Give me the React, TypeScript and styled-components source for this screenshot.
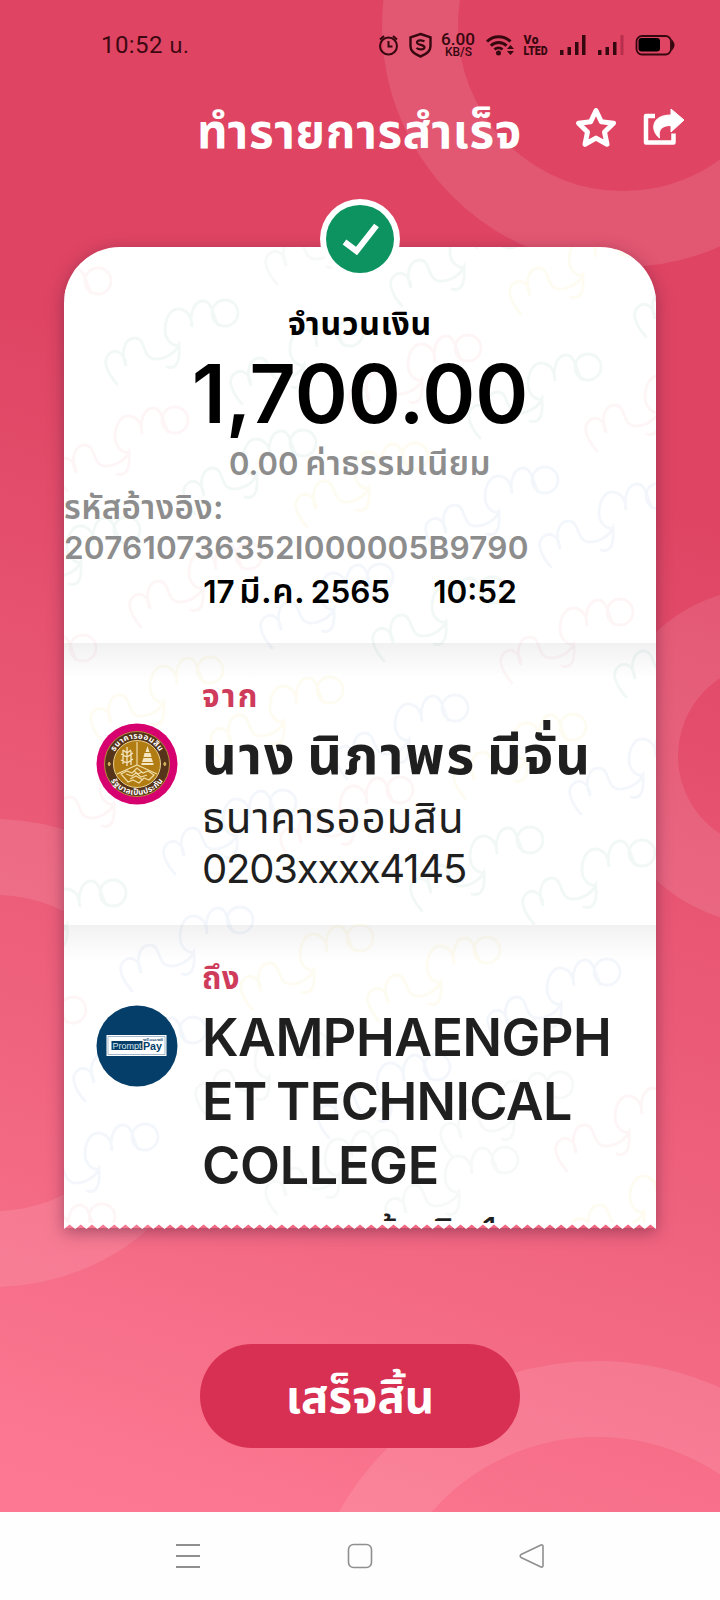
import React from 'react';
import styled, { createGlobalStyle } from 'styled-components';

const thaiStack = `Inter, 'Noto Sans Thai', 'Noto Sans', sans-serif`;

const Global = createGlobalStyle`
  body { margin: 0; font-family: ${thaiStack}; color: #000; }
  * { box-sizing: border-box; }
`;

const Screen = styled.main`
  position: relative;
  width: 720px;
  height: 1600px;
  overflow: hidden;
  display: flex;
  flex-direction: column;
  background: linear-gradient(197deg, #df4463 0%, #df4463 29%, #e75472 48%, #f0647f 70%, #fd7993 93%);
`;

const Backdrop = styled.svg`
  position: absolute;
  inset: 0;
`;

const StatusBar = styled.header`
  position: relative;
  display: flex;
  align-items: center;
  justify-content: space-between;
  height: 90px;
  padding: 0 44px 0 101px;
`;

const Clock = styled.span`
  font: 400 24px/30px Roboto, 'Noto Sans Thai', sans-serif;
  letter-spacing: 0.4px;
  color: #3d0812;
`;

const ClockUnit = styled.span`
  font-size: 22px;
`;

const TitleBar = styled.div`
  position: relative;
  display: flex;
  align-items: center;
  height: 78px;
  padding-left: 197px;
`;

const Title = styled.h1`
  margin: 0;
  padding-top: 3px;
  width: 322px;
  font-size: 47.5px;
  line-height: 78px;
  font-weight: 700;
  letter-spacing: 0.7px;
  color: #fff;
  white-space: nowrap;
`;

const TitleActions = styled.div`
  display: flex;
  gap: 24px;
  margin-left: 55px;
`;

const Slip = styled.section`
  position: relative;
  width: 592px;
  margin: 79px 0 0 64px;
`;

const SlipBody = styled.div`
  position: relative;
  height: 977px;
  border-radius: 56px 56px 0 0;
  background: #fff;
  overflow: hidden;
`;

const SlipShadow = styled.div`
  position: absolute;
  inset: 0 0 2px;
  border-radius: 56px 56px 0 0;
  box-shadow: 0 4px 16px rgba(90, 30, 60, 0.5);
`;

const Watermark = styled.svg`
  position: absolute;
  inset: 0;
  fill: none;
  stroke-width: 2.8;
  stroke-linecap: round;
`;

const Badge = styled.div`
  position: absolute;
  left: 256px;
  top: -48px;
  width: 80px;
  height: 80px;
`;

const Torn = styled.svg`
  position: relative;
  display: block;
  margin-top: -1px;
`;

const Summary = styled.div`
  position: relative;
  display: flex;
  flex-direction: column;
  align-items: center;
  height: 396px;
  padding-top: 56px;
`;

const Line = styled.div<{
  $size: number; $height: number; $weight?: number; $color?: string; $space?: number; $wordGap?: number;
}>`
  font-size: ${p => p.$size}px;
  line-height: ${p => p.$height}px;
  height: ${p => p.$height}px;
  font-weight: ${p => p.$weight ?? 600};
  color: ${p => p.$color ?? '#000'};
  letter-spacing: ${p => p.$space ?? 0}px;
  word-spacing: ${p => p.$wordGap ?? 0}px;
  white-space: nowrap;
`;

const Thai = styled.span`
  font-size: 1.07em;
  line-height: 0;
  letter-spacing: 0.5px;
  margin-left: -1px;
`;

const ReferenceLabel = styled.span`
  margin-left: 20px;
  font-size: 38px;
  line-height: 0;
  letter-spacing: -0.4px;
`;

const Reference = styled.div`
  align-self: stretch;
`;

const DateRow = styled.div`
  display: flex;
  gap: 43px;
  padding-top: 1px;
`;

const Party = styled.div<{ $height: number }>`
  position: relative;
  display: flex;
  height: ${p => p.$height}px;
  padding: 33px 0 0 32px;
  background: linear-gradient(rgba(70, 70, 80, 0.075), rgba(70, 70, 80, 0.04) 16px, transparent 36px);
`;

const PartyLogo = styled.svg`
  flex: none;
  margin: 47px 24px 0 0;
`;

const PartyName = styled.div`
  padding-top: 8px;
`;

const PartyText = styled.div``;

const Footer = styled.div`
  position: relative;
  display: flex;
  justify-content: center;
  margin-top: 114px;
`;

const DoneButton = styled.button`
  width: 320px;
  height: 104px;
  border: 0;
  border-radius: 52px;
  background: #d83052;
  color: #fff;
  font: 700 45.5px/100px ${thaiStack};
  padding-top: 2px;
`;

const NavBar = styled.nav`
  position: relative;
  display: flex;
  justify-content: space-between;
  align-items: center;
  height: 88px;
  margin-top: auto;
  padding: 0 175px;
  background: #fefefe;
`;

const mark =
  'M-108 71 C-116 62 -124 48 -116 41 C-108 34 -99 42 -99 53 C-105 38 -100 25 -90 25 C-80 25 -82 42 -74 45 C-67 48 -52 44 -46 32 C-45 46 -47 57 -58 54 M-46 32 C-52 34 -60 27 -60 17 C-60 6 -55 -4 -47 -4 C-38 -4 -33 4 -33 14 C-36 -1 -30 -12 -22 -12 C-13 -12 -12 2 -7 12';

const teal = '#f1f8f6';
const pink = '#fdf5f6';
const blue = '#f3f7fb';
const cream = '#fefbf1';
const gray = '#f7f8f8';
const marks: [number, number, string][] = [
  [98, 281, pink], [225, 313, teal], [175, 420, pink], [350, 333, teal], [385, 213, gray], [510, 235, teal],
  [629, 243, cream], [754, 266, teal], [468, 348, pink], [588, 367, teal], [705, 380, pink], [303, 443, teal],
  [415, 456, cream], [545, 480, blue], [659, 496, blue], [127, 530, teal], [249, 556, pink], [380, 577, blue],
  [492, 590, teal], [620, 612, pink], [734, 626, teal], [83, 648, pink], [210, 670, cream], [330, 690, cream],
  [455, 708, blue], [573, 727, cream], [689, 743, blue], [160, 772, pink], [283, 803, blue], [400, 790, pink],
  [530, 840, teal], [642, 853, teal], [113, 893, teal], [240, 920, blue], [360, 938, cream], [487, 950, cream],
  [607, 972, blue], [193, 1030, blue], [73, 1010, pink], [315, 1045, gray], [437, 1067, blue], [560, 1085, gray],
  [675, 1100, pink], [145, 1137, blue], [385, 1143, gray], [505, 1160, gray], [102, 1217, pink], [690, 1180, cream],
];

const torn = `M0 0 H592 V6 ${Array.from({ length: 53 }, (_, i) => {
  const w = 592 / 53;
  return `L${(592 - (i + 0.5) * w).toFixed(1)} 1.5 L${(592 - (i + 1) * w).toFixed(1)} 6`;
}).join(' ')} Z`;

function StatusIcons() {
  return (
    <svg width="300" height="30" viewBox="376 30 300 30" fill="none" stroke="#35070f" strokeWidth="2">
      <circle cx="388.5" cy="46" r="8.5" />
      <path d="M388.5 41v5.5h4M380 39.5l4-3.5M397 39.5l-4-3.5" />
      <path d="M420.500 34l10 3.300v9c0 5-4 8-10 10.200c-6-2.200-10-5.200-10-10.200v-9z" strokeWidth="2.400" />
      <path d="M424.500 41.500c-2-1.800-7.500-1.700-7.500 1c0 3 7.500 1.700 7.500 4.700c0 2.800-5.800 2.800-8 .8" strokeWidth="2.200" />
      <g fill="#35070f" stroke="none">
        <text x="441" y="44.500" fontFamily="Roboto" fontWeight="500" fontSize="16" textLength="34" lengthAdjust="spacingAndGlyphs">6.00</text>
        <text x="445" y="56" fontFamily="Roboto" fontWeight="500" fontSize="12.500" textLength="27" lengthAdjust="spacingAndGlyphs">KB/S</text>
        <text x="523.500" y="44" fontFamily="Roboto" fontWeight="900" fontSize="12" textLength="15">Vo</text>
        <text x="523.500" y="55" fontFamily="Roboto" fontWeight="900" fontSize="12.500" textLength="24" lengthAdjust="spacingAndGlyphs">LTED</text>
        <circle cx="498.500" cy="53" r="2.500" />
        <path d="M510.500 45l3.500 4h-7zM510.500 55l3.500-4h-7z" />
        <path d="M560 50h3.500v5h-3.500zM567.500 47h3.500v8h-3.500zM575 42h3.500v13h-3.500zM582 35h3.500v20h-3.500z" />
        <path d="M598 50h3.500v5h-3.500zM605.500 47h3.500v8h-3.500zM613 42h3.500v13h-3.500z" />
        <path d="M620.500 35h3v20h-3z" fill="#b72f4c" />
        <rect x="638.500" y="38" width="21.500" height="13.500" rx="3" fill="#000" />
        <path d="M672.500 42q2 3-0 6z" stroke="#35070f" />
      </g>
      <path d="M487 41.500a17 17 0 0 1 23.500 0M490.800 45.700a11.500 11.500 0 0 1 15.800 0M494.500 49.500a6 6 0 0 1 8 0" strokeWidth="2.900" />
      <rect x="636.500" y="36" width="34.500" height="18.500" rx="5.500" strokeWidth="1.800" />
    </svg>
  );
}

function Seal() {
  return (
    <PartyLogo width="82" height="82" viewBox="-41 -41 82 82">
      <defs>
        <path id="sealTop" d="M-25.500 0a25.500 25.500 0 0 1 51 0" />
        <path id="sealBottom" d="M-31 0a31 31 0 0 0 62 0" />
      </defs>
      <circle r="40.500" fill="#d6006f" />
      <circle r="32.500" fill="#55341a" stroke="#b98a3a" strokeWidth="1" />
      <circle r="23.500" fill="#b17d12" stroke="#e8cf91" strokeWidth="1" />
      <g fill="#fff" fontSize="8" fontWeight="700" textAnchor="middle">
        <text><textPath href="#sealTop" startOffset="50%" textLength="54">ธนาคารออมสิน</textPath></text>
        <text><textPath href="#sealBottom" startOffset="50%" textLength="62">รัฐบาลเป็นประกัน</textPath></text>
      </g>
      <path d="M-29 0l1.200-2 1.200 2-1.200 2zM26.600 0l1.200-2 1.200 2-1.200 2z" fill="#d8b45e" stroke="#d8b45e" />
      <path d="M0-22V1M-20 10L0 1L20 10" stroke="#f0dba5" fill="none" strokeWidth="1.200" />
      <path d="M10.500-18l2 6h-4zM7.500-11h6l1 4h-8zM6.500-6h8l1.500 4h-11zM4.500-1h12v2h-12z" fill="#f5e7c2" />
      <path d="M-10-17v19M-14-14v14M-6-13v14M-16-10l6 3 6-4M-16-4l6 3 6-4M-14-14l4 3 4-3" stroke="#f5e7c2" fill="none" strokeWidth="1.300" />
      <path d="M-16 10l6-3 5 2 5-5 6 5 5-2 6 4-5 5-5-2-5 5-6-3-5 2zM-11 10l6 2 4-3 5 4 6-2M-7 15l6-3 7 4M-3 7l4 3 4-2" fill="none" stroke="#f0dba5" strokeWidth="1.200" />
    </PartyLogo>
  );
}

function PromptPay() {
  return (
    <PartyLogo width="82" height="82" viewBox="0 0 82 82">
      <circle cx="41" cy="41" r="40.500" fill="#053f69" />
      <path d="M10.500 30h60v21h-60z" fill="#fff" />
      <path d="M12 31.500h57v18h-57z" fill="none" stroke="#7c9bb4" strokeWidth=".7" />
      <path d="M15.500 36h31v9h-31z" fill="#053f69" />
      <g fontFamily="Liberation Sans" fontWeight="700">
        <text x="16.500" y="43.500" fontSize="8.500" fontWeight="400" fill="#dbe7f0" textLength="29" lengthAdjust="spacingAndGlyphs">Prompt</text>
        <text x="47" y="44.500" fontSize="11" fill="#053f69" textLength="19" lengthAdjust="spacingAndGlyphs">Pay</text>
        <text x="47" y="35.500" fontSize="3.500" fill="#456b8c" textLength="20" lengthAdjust="spacingAndGlyphs">พร้อมเพย์</text>
      </g>
    </PartyLogo>
  );
}

export default function App() {
  return (
    <Screen>
      <Global />
      <Backdrop width="720" height="1600" fill="none" stroke="rgba(255,255,255,.1)" strokeWidth="76">
        <circle cx="623" cy="26" r="203" />
        <circle cx="771" cy="756" r="131" />
        <circle cx="-6" cy="1053" r="196" />
        <circle cx="597" cy="1657" r="258" />
      </Backdrop>

      <StatusBar>
        <Clock>10:52 <ClockUnit>น.</ClockUnit></Clock>
        <StatusIcons />
      </StatusBar>

      <TitleBar>
        <Title>ทำรายการสำเร็จ</Title>
        <TitleActions>
          <svg width="44" height="44" viewBox="574 107 44 44" fill="none" stroke="#fff" strokeWidth="5" strokeLinejoin="round">
            <path d="M596 110.500l5.300 11.300 12.200 1.500-9 8.700 2.500 12.300-11-6.200-11 6.200 2.500-12.300-9-8.700 12.200-1.500z" />
          </svg>
          <svg width="44" height="44" viewBox="642 107 44 44">
            <path d="M655 116h-9v26.500h27.500v-9" fill="none" stroke="#fff" strokeWidth="4.500" strokeLinejoin="round" />
            <path d="M671 109l13 11-13 12v-6.500c-9 0-13 4-11.500 12.500c-9-7-9-23 11.500-23z" fill="#fff" stroke="#fff" strokeLinejoin="round" />
          </svg>
        </TitleActions>
      </TitleBar>

      <Slip>
        <SlipShadow />
        <SlipBody>
          <Watermark width="592" height="977" viewBox="64 247 592 977">
            {marks.map(([x, y, color]) => (
              <g key={`${x}-${y}`} transform={`translate(${x} ${y})`} stroke={color}>
                <path d={mark} />
                <circle r="13" />
              </g>
            ))}
          </Watermark>
          <Summary>
            <Line $size={32} $height={42} $weight={700} $space={0.8}>จำนวนเงิน</Line>
            <Line $size={80.5} $height={97}>1,700.00</Line>
            <Line $size={31} $height={44} $color="#8d8d8d">0.00 <Thai>ค่าธรรมเนียม</Thai></Line>
            <Reference>
              <Line $size={33} $height={43} $color="#8d8d8d" $space={0.4}>รหัสอ้างอิง:</Line>
              <Line $size={31.5} $height={38} $color="#8d8d8d" $space={0.2}>207610736352I000005B9790</Line>
            </Reference>
            <DateRow>
              <Line $size={31.5} $height={48} $wordGap={-2.5}>17 <Thai>มี.ค.</Thai> 2565</Line>
              <Line $size={31.5} $height={48}>10:52</Line>
            </DateRow>
          </Summary>
          <Party $height={282}>
            <Seal />
            <PartyText>
              <Line $size={31.5} $height={40} $weight={700} $color="#cf3b5b" $space={2.2}>จาก</Line>
              <Line $size={54} $height={78} $weight={700} $color="#1f1f1f" $space={1.7} $wordGap={-3.5}>นาง นิภาพร มีจั่น</Line>
              <Line $size={42} $height={47} $weight={400} $color="#1f1f1f" $space={0.9}>ธนาคารออมสิน</Line>
              <Line $size={40} $height={56} $weight={400} $color="#1f1f1f" $space={-1.2}>0203xxxx4145</Line>
            </PartyText>
          </Party>
          <Party $height={320}>
            <PromptPay />
            <PartyText>
              <Line $size={31} $height={40} $weight={700} $color="#cf3b5b" $space={0.5}>ถึง</Line>
              <PartyName>
                <Line $size={52} $height={64} $color="#1f1f1f" $space={-0.5}>KAMPHAENGPH</Line>
                <Line $size={52} $height={64} $color="#1f1f1f" $space={-0.6} $wordGap={-3}>ET TECHNICAL</Line>
                <Line $size={52} $height={64} $color="#1f1f1f" $space={-0.3}>COLLEGE</Line>
              </PartyName>
              <Line $size={40} $height={66} $weight={400} $color="#1f1f1f" $space={1.5} $wordGap={-3}>
                หมายเลข<ReferenceLabel>อ้างอิง 1</ReferenceLabel>
              </Line>
            </PartyText>
          </Party>
        </SlipBody>
        <Torn width="592" height="7" viewBox="0 0 592 7"><path d={torn} fill="#fff" /></Torn>
        <Badge>
          <svg width="80" height="80" viewBox="0 0 80 80">
            <circle cx="40" cy="40" r="40" fill="#fff" />
            <circle cx="40" cy="40" r="34" fill="#0d9360" />
            <path d="M24.500 43l12 9L56.500 26.500" fill="none" stroke="#fff" strokeWidth="6" />
          </svg>
        </Badge>
      </Slip>

      <Footer>
        <DoneButton>เสร็จสิ้น</DoneButton>
      </Footer>

      <NavBar>
        <svg width="26" height="26" viewBox="0 0 26 26" stroke="#8f8f8f" strokeWidth="1.800"><path d="M1 2h24M1 13h24M1 24h24" /></svg>
        <svg width="26" height="26" viewBox="0 0 26 26" stroke="#8f8f8f" strokeWidth="1.600" fill="none"><rect x="1.500" y="1.500" width="23" height="23" rx="5" /></svg>
        <svg width="26" height="26" viewBox="0 0 26 26" stroke="#8f8f8f" strokeWidth="1.600" fill="none" strokeLinejoin="round"><path d="M2 11.500L22 2q2-.5 2 1.500v19q0 2-2 1.500L2 14.500q-1.500-1.500 0-3z" /></svg>
      </NavBar>
    </Screen>
  );
}
